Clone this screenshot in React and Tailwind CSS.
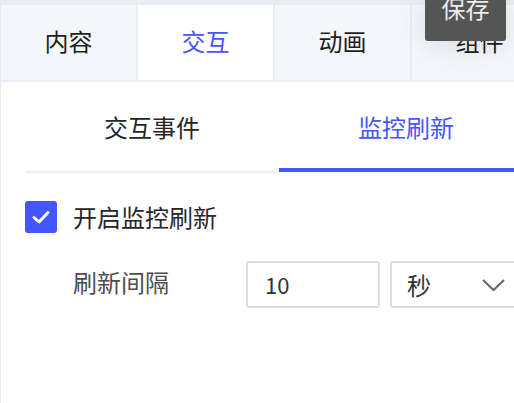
import React from "react";

const FONT = { fontFamily: '"Noto Sans CJK SC", "Noto Sans", sans-serif' };

export default function App() {
  const tabs = ["内容", "交互", "动画", "组件"];
  return (
    <div
      className="relative w-[514px] h-[403px] overflow-hidden bg-white border-l border-[#e6ecf4]"
      style={FONT}
    >
      <div className="h-[5px] bg-[#e9ecf1]" />
      <div className="flex h-[77px] border-b-2 border-[#e9eef4] bg-[#f4f7fb]">
        {tabs.map((t, i) => (
          <div
            key={t}
            className={
              "w-[137px] shrink-0 border-r-2 border-[#e9eef4] flex items-center justify-center pb-[3px] text-[24px] leading-[24px] " +
              (i === 1 ? "bg-white text-[#4755ff]" : "text-[#1f1f1f]")
            }
          >
            {t}
          </div>
        ))}
      </div>

      <div className="ml-[24px] flex w-[508px] items-start">
        <div className="w-[254px] shrink-0 h-[91px] border-b-2 border-[#eeeeee] pt-[33px] text-center text-[24px] leading-[24px] text-[#262626]">
          交互事件
        </div>
        <div className="w-[254px] shrink-0 h-[90px] border-b-4 border-[#4456ff] pt-[33px] text-center text-[24px] leading-[24px] text-[#4755ff]">
          监控刷新
        </div>
      </div>

      <div className="ml-[24px] mt-[28px] flex items-center gap-[16px]">
        <div className="w-[32px] h-[32px] shrink-0 rounded-[3px] bg-[#4456ff] flex items-center justify-center">
          <svg width="20" height="16" viewBox="0 0 20 16" fill="none">
            <path d="M3 8.5 L8 13 L17 3.5" stroke="white" strokeWidth="3" strokeLinecap="round" strokeLinejoin="round" />
          </svg>
        </div>
        <span className="text-[24px] leading-[24px] text-[#262626]">开启监控刷新</span>
      </div>

      <div className="mt-[28px] flex items-center">
        <span className="ml-[72px] w-[173px] shrink-0 text-[24px] leading-[24px] text-[#4d4d4d] -mt-[6px]">刷新间隔</span>
        <div className="w-[134px] shrink-0 h-[47px] border-2 border-[#dddddd] rounded-[3px] flex items-center pl-[17px] text-[22px] text-[#333333]">
          10
        </div>
        <div className="ml-[10px] w-[150px] shrink-0 h-[47px] border-2 border-[#dddddd] rounded-[3px] flex items-center pl-[15px] text-[24px] leading-[24px] text-[#333333]">
          <span>秒</span>
          <svg className="ml-[50px] shrink-0" width="25" height="14" viewBox="0 0 25 14" fill="none">
            <path d="M2 2 L12.5 12 L23 2" stroke="#666666" strokeWidth="2" />
          </svg>
        </div>
      </div>

      <div className="absolute left-[424px] top-0 w-[81px] h-[41px] bg-[#555555] rounded-b-[3px] shadow-[0_4px_30px_rgba(0,0,0,0.12)] flex justify-center overflow-hidden">
        <span className="text-[24px] leading-[24px] text-[#ececec] -mt-[4px]">保存</span>
      </div>
    </div>
  );
}
